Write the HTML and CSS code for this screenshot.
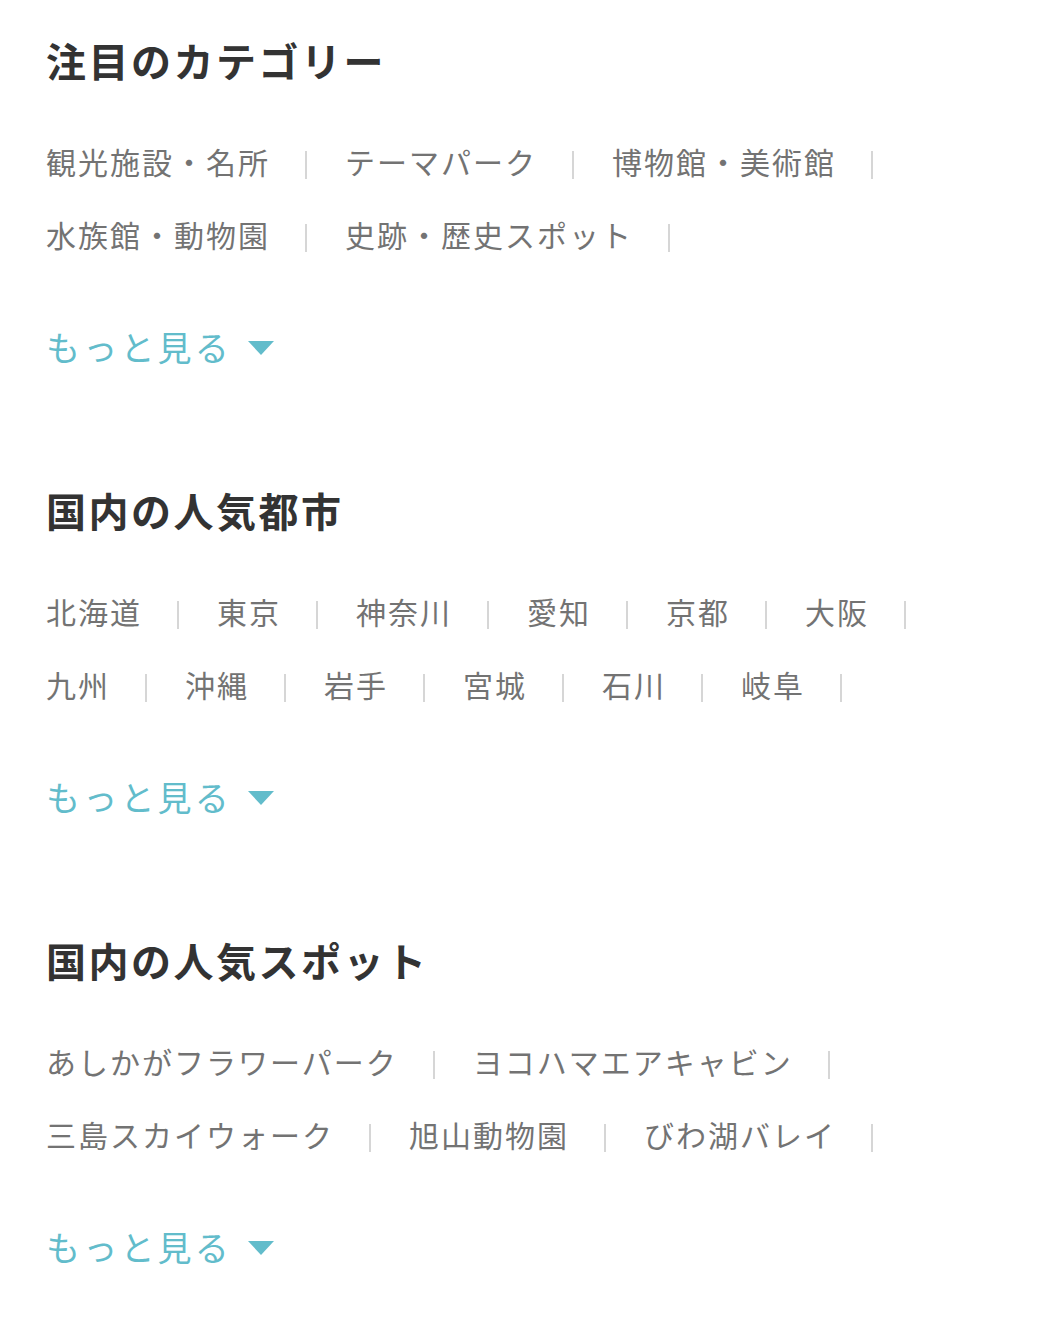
FILE: index.html
```html
<!DOCTYPE html>
<html lang="ja">
<head>
<meta charset="utf-8">
<title>カテゴリー</title>
<link rel="stylesheet" href="styles.css">
</head>
<body>
<main class="page">
  <section class="section">
    <h2 class="section-title">注目のカテゴリー</h2>
    <ul class="link-list">
      <li class="link-item"><a href="#">観光施設・名所</a></li>
      <li class="link-item"><a href="#">テーマパーク</a></li>
      <li class="link-item"><a href="#">博物館・美術館</a></li>
      <li class="link-item"><a href="#">水族館・動物園</a></li>
      <li class="link-item"><a href="#">史跡・歴史スポット</a></li>
    </ul>
    <a class="more" href="#">もっと見る<span class="more-arrow"></span></a>
  </section>
  <section class="section">
    <h2 class="section-title">国内の人気都市</h2>
    <ul class="link-list">
      <li class="link-item"><a href="#">北海道</a></li>
      <li class="link-item"><a href="#">東京</a></li>
      <li class="link-item"><a href="#">神奈川</a></li>
      <li class="link-item"><a href="#">愛知</a></li>
      <li class="link-item"><a href="#">京都</a></li>
      <li class="link-item"><a href="#">大阪</a></li>
      <li class="link-item"><a href="#">九州</a></li>
      <li class="link-item"><a href="#">沖縄</a></li>
      <li class="link-item"><a href="#">岩手</a></li>
      <li class="link-item"><a href="#">宮城</a></li>
      <li class="link-item"><a href="#">石川</a></li>
      <li class="link-item"><a href="#">岐阜</a></li>
    </ul>
    <a class="more" href="#">もっと見る<span class="more-arrow"></span></a>
  </section>
  <section class="section">
    <h2 class="section-title">国内の人気スポット</h2>
    <ul class="link-list">
      <li class="link-item"><a href="#">あしかがフラワーパーク</a></li>
      <li class="link-item"><a href="#">ヨコハマエアキャビン</a></li>
      <li class="link-item"><a href="#">三島スカイウォーク</a></li>
      <li class="link-item"><a href="#">旭山動物園</a></li>
      <li class="link-item"><a href="#">びわ湖バレイ</a></li>
    </ul>
    <a class="more" href="#">もっと見る<span class="more-arrow"></span></a>
  </section>
</main>
</body>
</html>
```

FILE: styles.css
```css
html, body {
  margin: 0;
  padding: 0;
  background: #ffffff;
}

body {
  font-family: "Noto Sans CJK JP", "Noto Sans", sans-serif;
}

.page {
  padding: 36px 46px 0 46px;
}

.section {
  display: flex;
  flex-direction: column;
  align-items: flex-start;
  padding-bottom: 114px;
}

.section-title {
  margin: 0;
  font-size: 40px;
  line-height: 48px;
  font-weight: 700;
  letter-spacing: 2.5px;
  color: #333333;
}

.link-list {
  list-style: none;
  margin: 41px 0 0 0;
  padding: 0;
  display: flex;
  flex-wrap: wrap;
  width: 100%;
}

.link-item {
  display: flex;
  align-items: center;
  height: 73px;
  font-size: 30px;
  letter-spacing: 2px;
}

.link-item a {
  color: #737373;
  text-decoration: none;
  line-height: 73px;
}

.link-item::after {
  content: "";
  display: block;
  width: 2px;
  height: 28px;
  margin: 6px 38px 0 35px;
  background: #d6d6d6;
}

.more {
  display: flex;
  align-items: center;
  margin-top: 51px;
  font-size: 34px;
  line-height: 50px;
  letter-spacing: 3.2px;
  color: #62bccb;
  text-decoration: none;
}

.more-arrow {
  display: block;
  width: 0;
  height: 0;
  margin-left: 16px;
  margin-top: 2px;
  border-left: 13px solid transparent;
  border-right: 13px solid transparent;
  border-top: 14px solid #62bccb;
}
```
